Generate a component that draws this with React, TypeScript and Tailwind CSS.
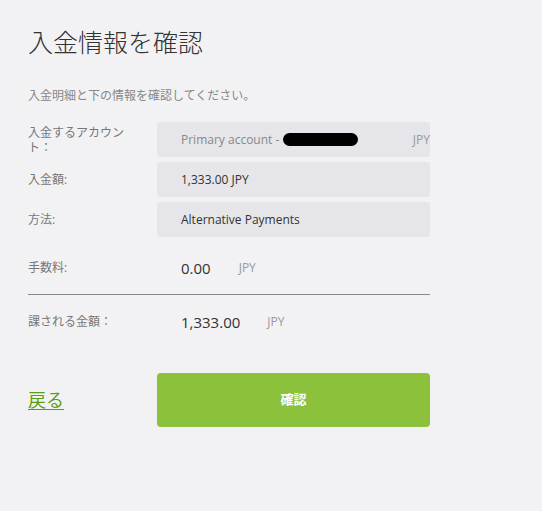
import React from 'react';

const jp = "font-['Open_Sans','Noto_Sans_CJK_JP',sans-serif]";

function Field({ label, children }: { label: React.ReactNode; children: React.ReactNode }) {
  return (
    <div className="flex items-center">
      <div className="w-[129px] pr-[22px] text-[12px] leading-[15px] text-[#777]">{label}</div>
      <div className="flex h-[35px] flex-1 items-center rounded-[3px] bg-[#e6e6ea] pl-[24px] text-[12px] text-[#333]">
        {children}
      </div>
    </div>
  );
}

export default function App() {
  return (
    <div className={`min-h-[511px] w-[542px] bg-[#f2f2f4] ${jp}`}>
      <div className="w-[430px] pl-[28px] pt-[26px]">
        <h1 className="text-[25px] font-light leading-[32px] text-[#333]">入金情報を確認</h1>
        <p className="mt-[30px] text-[12px] leading-[16px] text-[#888]">入金明細と下の情報を確認してください。</p>

        <div className="mt-[18px] flex flex-col gap-[5px]">
          <Field label={<><span className="block">入金するアカウン</span><span className="block">ト：</span></>}>
            <span className="text-[#888]">Primary account -</span>
            <span className="ml-[4px] inline-block h-[13px] w-[75px] rounded-full bg-black" />
            <span className="ml-auto text-[#999]">JPY</span>
          </Field>
          <Field label="入金額:">1,333.00 JPY</Field>
          <Field label="方法:">Alternative Payments</Field>
        </div>

        <div className="mt-[20px] flex items-center">
          <div className="w-[153px] text-[12px] text-[#777]">手数料:</div>
          <span className="text-[15px] text-[#333]">0.00</span>
          <span className="ml-[28px] text-[12px] text-[#999]">JPY</span>
        </div>

        <div className="mt-[14px] border-t border-[#888]" />

        <div className="mt-[16px] flex items-center">
          <div className="w-[153px] text-[12px] text-[#777]">課される金額：</div>
          <span className="text-[15px] text-[#333]">1,333.00</span>
          <span className="ml-[27px] text-[12px] text-[#999]">JPY</span>
        </div>

        <div className="mt-[40px] flex items-center">
          <a href="#" className="w-[129px] text-[18px] text-[#5c9e10] underline underline-offset-2">戻る</a>
          <button className="h-[54px] flex-1 rounded-[4px] bg-[#8cc13b] text-[13px] font-bold text-white">確認</button>
        </div>
      </div>
    </div>
  );
}
